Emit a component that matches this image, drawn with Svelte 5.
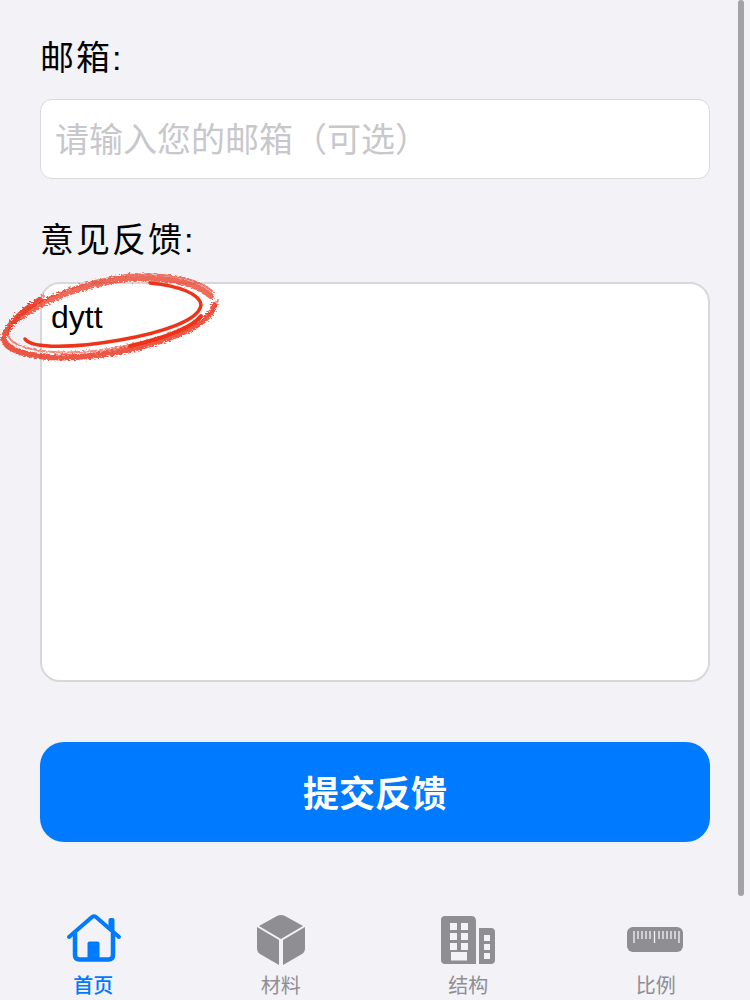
<script>
    const tabs = [
        { id: 'home', label: '首页' },
        { id: 'material', label: '材料' },
        { id: 'structure', label: '结构' },
        { id: 'scale', label: '比例' }
    ];
    let email = '';
    let feedback = 'dytt';

    // rough pen strokes for the red circle
    const outer = 'M40 300 C25 309 8 323 4 337 C2 352 40 361 90 356 C150 349 212 327 214 305';
    const top = 'M14 322 C40 300 85 284 125 279 C160 276 195 281 211 296';
</script>

<div class="page">
    <form class="form" on:submit|preventDefault>
        <label class="label" for="email">邮箱:</label>
        <input id="email" class="input" placeholder="请输入您的邮箱（可选）" bind:value={email} />

        <label class="label second" for="feedback">意见反馈:</label>
        <textarea id="feedback" class="textarea" bind:value={feedback}></textarea>

        <button class="submit" type="submit">提交反馈</button>
    </form>

    <nav class="tabs">
        {#each tabs as tab, i}
            <div class="tab" class:active={i === 0}>
                <svg class="icon" width="60" height="52" viewBox="0 0 60 52">
                    {#if tab.id === 'home'}
                        <path d="M5 24 L28 4 Q30 2.500 32 4 L55 24" fill="none" stroke="currentColor" stroke-width="4" stroke-linecap="round" stroke-linejoin="round" />
                        <path d="M11 20 V42 Q11 46.500 15.500 46.500 H44.500 Q49 46.500 49 42 V20" fill="none" stroke="currentColor" stroke-width="4.500" />
                        <path d="M44.500 13 V7 Q44.500 5 46.500 5 H48.500 Q50.500 5 50.500 7 V20 Z" fill="currentColor" />
                        <path d="M23.500 47 V30.500 Q23.500 28.500 25.500 28.500 H33.500 Q35.500 28.500 35.500 30.500 V47 Z" fill="currentColor" />
                    {:else if tab.id === 'material'}
                        <path d="M26 3 Q30 1 34 3 L52 13 L30 26 L8 13 Z" fill="currentColor" />
                        <path d="M6 17 L28 30 V55 L9 44 Q6 42 6 38 Z" fill="currentColor" transform="translate(0 -3)" />
                        <path d="M54 17 L32 30 V55 L51 44 Q54 42 54 38 Z" fill="currentColor" transform="translate(0 -3)" />
                    {:else if tab.id === 'structure'}
                        <g transform="translate(-1 2)">
                            <path fill-rule="evenodd" fill="currentColor" d="M7 1 H33 Q38 1 38 6 V49 H7 Q3 49 3 45 V5 Q3 1 7 1 Z M12 8 V15 H19 V8 Z M23 8 V15 H30 V8 Z M12 18 V25 H19 V18 Z M23 18 V25 H30 V18 Z M12 28 V35 H19 V28 Z M23 28 V35 H30 V28 Z M13 37 V45.500 H29 V37 Z" />
                            <path fill-rule="evenodd" fill="currentColor" d="M41 13 H53 Q57 13 57 17 V45 Q57 49 53 49 H41 Z M46 20 V26 H52 V20 Z M46 29 V35 H52 V29 Z M46 38 V44 H52 V38 Z" />
                        </g>
                    {:else}
                        <rect x="1" y="14" width="56" height="25" rx="6" fill="currentColor" />
                        <path d="M8 18 V30 M12 18 V26 M16 18 V26 M20 18 V26 M24 18 V26 M28.500 18 V30 M33 18 V26 M37 18 V26 M41 18 V26 M45 18 V26 M49 18 V26 M53 18 V30" stroke="#f2f2f7" stroke-width="1.300" fill="none" />
                    {/if}
                </svg>
                <span class="tab-label">{tab.label}</span>
            </div>
        {/each}
    </nav>

    <!-- hand drawn annotation lying over the form -->
    <svg class="scribble" width="240" height="110" viewBox="0 260 240 110">
        <defs>
            <filter id="rough" x="-10%" y="-20%" width="120%" height="140%">
                <feTurbulence type="fractalNoise" baseFrequency="0.35 0.9" numOctaves="2" seed="4" result="noise" />
                <feDisplacementMap in="SourceGraphic" in2="noise" scale="5" />
            </filter>
        </defs>
        <g filter="url(#rough)">
            <path d={top} stroke-width="6" opacity="0.75" />
            <path d={top} stroke-width="2" transform="translate(2 -4)" opacity="0.7" />
            <path d={outer} stroke-width="6" opacity="0.85" />
            <path d={outer} stroke-width="2" transform="translate(4 -5)" opacity="0.6" />
        </g>
        <path class="solid" d="M25 339 C32 349 75 348 120 340 C160 333 199 321 201 305 C200 294 180 286 150 283" stroke-width="3.500" />
        <path class="solid" d="M130 346 C160 339 190 330 201 316" stroke-width="4" />
    </svg>

    <div class="scrollbar"></div>
</div>

<style>
    :global(body) {
        margin: 0;
        background: #f2f2f7;
    }

    .page {
        position: relative;
        width: 750px;
        height: 1000px;
        overflow: hidden;
        background: #f2f2f7;
        font-family: "Liberation Sans", "Noto Sans CJK SC", sans-serif;
    }

    .form {
        display: flex;
        flex-direction: column;
        padding: 38px 40px 0;
    }

    .label {
        height: 40px;
        margin-bottom: 21px;
        font-size: 34px;
        line-height: 40px;
        letter-spacing: 2px;
        color: #000;
    }

    .label.second {
        margin-top: 41px;
        margin-bottom: 22px;
    }

    .input {
        box-sizing: border-box;
        height: 80px;
        padding: 2px 14px 0;
        border: 1.5px solid #d9d9dc;
        border-radius: 12px;
        outline: none;
        background: #fff;
        font: inherit;
        font-size: 34px;
        color: #000;
    }

    .input::placeholder {
        color: #c7c7cc;
        opacity: 1;
    }

    .textarea {
        box-sizing: border-box;
        height: 400px;
        padding: 15px 9px;
        border: 2px solid #d8d8dc;
        border-radius: 20px;
        outline: none;
        resize: none;
        background: #fff;
        font: inherit;
        font-size: 32px;
        line-height: 36px;
        color: #000;
    }

    .submit {
        height: 100px;
        margin-top: 60px;
        padding-bottom: 3px;
        border: 0;
        border-radius: 24px;
        background: #007aff;
        font: inherit;
        font-size: 36px;
        font-weight: 700;
        color: #fff;
    }

    .tabs {
        display: grid;
        grid-template-columns: repeat(4, 1fr);
        margin-top: 71px;
    }

    .tab {
        display: flex;
        flex-direction: column;
        align-items: center;
        color: #8e8e93;
    }

    .tab.active {
        color: #007aff;
    }

    .icon {
        display: block;
    }

    .tab-label {
        margin-top: 8px;
        margin-right: 1px;
        font-size: 20px;
        line-height: 26px;
    }

    .tab.active .tab-label {
        font-weight: 500;
    }

    .scribble {
        position: absolute;
        left: 0;
        top: 260px;
        pointer-events: none;
    }

    .scribble path {
        fill: none;
        stroke: #ea3a24;
        stroke-linecap: round;
    }

    .scribble .solid {
        stroke: #ee3319;
    }

    .scrollbar {
        position: absolute;
        top: 0;
        right: 6px;
        width: 6px;
        height: 896px;
        border-radius: 3px;
        background: #a2a2a7;
    }
</style>
